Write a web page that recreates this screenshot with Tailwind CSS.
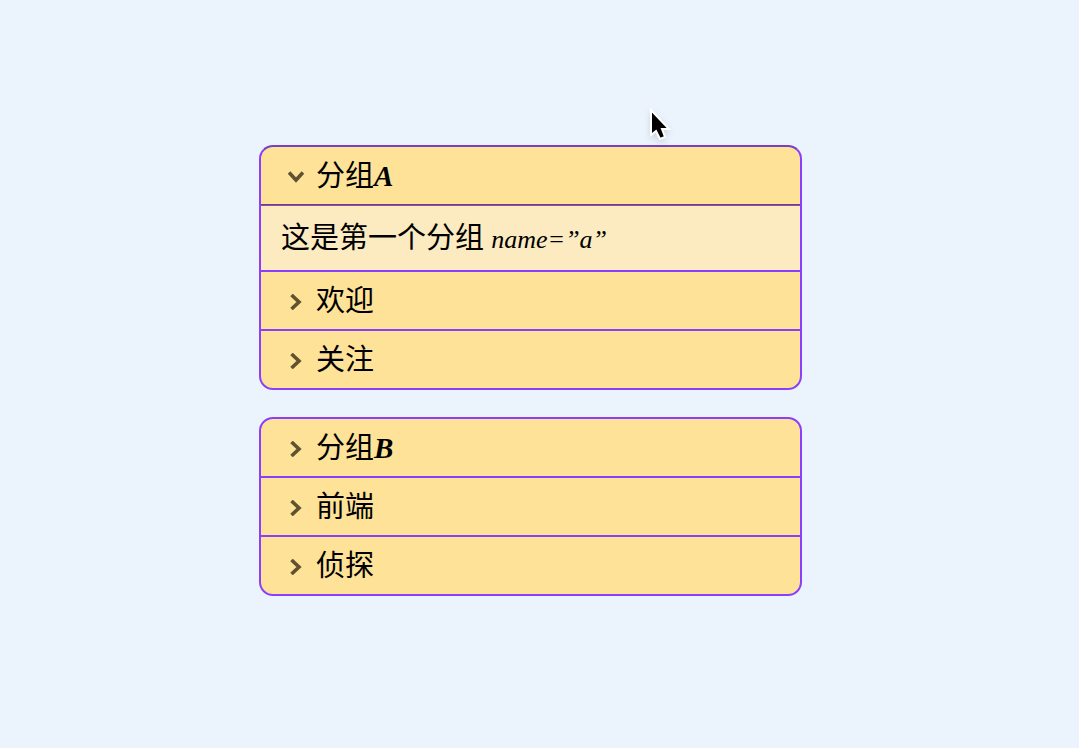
<!DOCTYPE html>
<html lang="zh-CN">
<head>
  <meta charset="UTF-8">
  <meta name="viewport" content="width=device-width, initial-scale=1.0">
  <title>details name</title>
  <script src="https://cdn.jsdelivr.net/npm/@tailwindcss/browser@4"></script>
</head>
<body class="bg-[#ebf4fc] text-black font-['Liberation_Serif','Noto_Sans_CJK_SC',serif] text-[29px] leading-[57px]">

  <main class="min-h-screen flex flex-col items-center justify-center gap-[27px] pr-[18px] pb-[7px]">

    <!-- Group A -->
    <section class="w-1/2 min-w-[543px] border-2 border-[#8a3ffc] border-t-[#7440c8] rounded-[14px] overflow-hidden divide-y-2 divide-[#8a3ffc] bg-[#fde298]">
      <details name="a" class="group" open>
        <summary class="flex items-center gap-3 h-[57px] pt-0.5 pl-[27px] cursor-pointer list-none">
          <svg class="w-4 h-4 rotate-90 group-not-open:rotate-0" viewBox="0 0 16 16" fill="none" stroke="#5f522f" stroke-width="3.6"><path d="M3.5 1l7.5 7-7.5 7"/></svg>
          <span>分组<i class="font-bold">A</i></span>
        </summary>
        <div class="border-t border-[#7a4a30]">
          <p class="h-[65px] pl-5 leading-[65px] border-t border-[#8a3ffc] bg-[#fcebc0]">这是第一个分组 <i class="text-[26px]">name=”a”</i></p>
        </div>
      </details>
      <details name="a" class="group">
        <summary class="flex items-center gap-3 h-[57px] pt-0.5 pl-[27px] cursor-pointer list-none">
          <svg class="w-4 h-4 group-open:rotate-90" viewBox="0 0 16 16" fill="none" stroke="#5f522f" stroke-width="3.6"><path d="M3.5 1l7.5 7-7.5 7"/></svg>
          <span>欢迎</span>
        </summary>
      </details>
      <details name="a" class="group">
        <summary class="flex items-center gap-3 h-[57px] pt-0.5 pl-[27px] cursor-pointer list-none">
          <svg class="w-4 h-4 group-open:rotate-90" viewBox="0 0 16 16" fill="none" stroke="#5f522f" stroke-width="3.6"><path d="M3.5 1l7.5 7-7.5 7"/></svg>
          <span>关注</span>
        </summary>
      </details>
    </section>

    <!-- Group B -->
    <section class="w-1/2 min-w-[543px] border-2 border-[#8a3ffc] rounded-[14px] overflow-hidden divide-y-2 divide-[#8a3ffc] bg-[#fde298]">
      <details name="b" class="group">
        <summary class="flex items-center gap-3 h-[57px] pt-0.5 pl-[27px] cursor-pointer list-none">
          <svg class="w-4 h-4 group-open:rotate-90" viewBox="0 0 16 16" fill="none" stroke="#5f522f" stroke-width="3.6"><path d="M3.5 1l7.5 7-7.5 7"/></svg>
          <span>分组<i class="font-bold">B</i></span>
        </summary>
      </details>
      <details name="b" class="group">
        <summary class="flex items-center gap-3 h-[57px] pt-0.5 pl-[27px] cursor-pointer list-none">
          <svg class="w-4 h-4 group-open:rotate-90" viewBox="0 0 16 16" fill="none" stroke="#5f522f" stroke-width="3.6"><path d="M3.5 1l7.5 7-7.5 7"/></svg>
          <span>前端</span>
        </summary>
      </details>
      <details name="b" class="group">
        <summary class="flex items-center gap-3 h-[57px] pt-0.5 pl-[27px] cursor-pointer list-none">
          <svg class="w-4 h-4 group-open:rotate-90" viewBox="0 0 16 16" fill="none" stroke="#5f522f" stroke-width="3.6"><path d="M3.5 1l7.5 7-7.5 7"/></svg>
          <span>侦探</span>
        </summary>
      </details>
    </section>
  </main>

  <!-- Mouse pointer -->
  <svg class="absolute left-[648px] top-[108px] w-[24px] h-[34px] drop-shadow-md pointer-events-none" viewBox="0 0 24 34"><path d="M3 2v25l5-4 4 8 5-2-3-8h7z" fill="#000" stroke="#fff" stroke-width="2"/></svg>

</body>
</html>
